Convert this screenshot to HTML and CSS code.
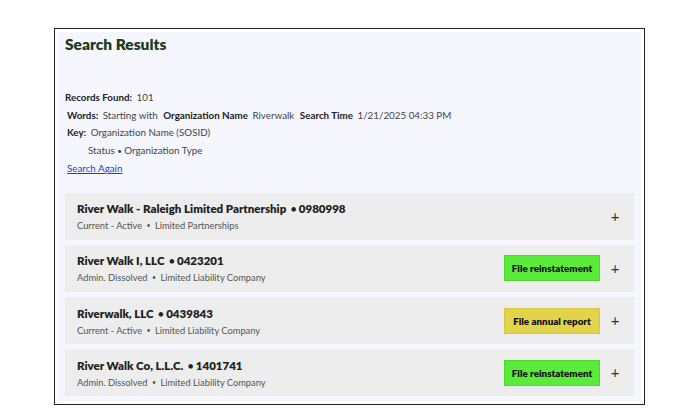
FILE: index.html
```html
<!DOCTYPE html>
<html>
<head>
<meta charset="utf-8">
<link rel="stylesheet" href="styles.css">
</head>
<body>
<div class="frame">
  <div class="panel">
    <h2 class="title">Search Results</h2>
    <div class="meta">
      <div class="line records"><b>Records Found:</b> 101</div>
      <div class="line words"><b>Words:</b> Starting with <b>Organization Name</b> Riverwalk <b>Search Time</b> 1/21/2025 04:33 PM</div>
      <div class="line key"><b>Key:</b> Organization Name (SOSID)</div>
      <div class="line status">Status <span class="sdot">•</span> Organization Type</div>
      <a class="line again" href="#">Search Again</a>
    </div>
    <div class="list">
      <div class="row">
        <div class="info">
          <div class="name">River Walk - Raleigh Limited Partnership <span class="id"><span class="bdot">•</span> 0980998</span></div>
          <div class="sub">Current - Active <span class="dot">•</span> Limited Partnerships</div>
        </div>
        <span class="plus">+</span>
      </div>
      <div class="row">
        <div class="info">
          <div class="name">River Walk I, LLC <span class="id"><span class="bdot">•</span> 0423201</span></div>
          <div class="sub">Admin. Dissolved <span class="dot">•</span> Limited Liability Company</div>
        </div>
        <span class="btn green">File reinstatement</span>
        <span class="plus">+</span>
      </div>
      <div class="row">
        <div class="info">
          <div class="name">Riverwalk, LLC <span class="id"><span class="bdot">•</span> 0439843</span></div>
          <div class="sub">Current - Active <span class="dot">•</span> Limited Liability Company</div>
        </div>
        <span class="btn yellow">File annual report</span>
        <span class="plus">+</span>
      </div>
      <div class="row">
        <div class="info">
          <div class="name">River Walk Co, L.L.C. <span class="id"><span class="bdot">•</span> 1401741</span></div>
          <div class="sub">Admin. Dissolved <span class="dot">•</span> Limited Liability Company</div>
        </div>
        <span class="btn green">File reinstatement</span>
        <span class="plus">+</span>
      </div>
    </div>
  </div>
</div>
</body>
</html>
```

FILE: styles.css
```css
* { box-sizing: border-box; }
html, body { margin: 0; padding: 0; background: #fff; }
body {
  font-family: "Lato", "Liberation Sans", sans-serif;
  color: #333;
}
.frame {
  margin: 28px 0 0 54px;
  width: 591px;
  height: 377px;
  border: 1px solid #222;
  padding: 3px;
  background: #fff;
}
.panel {
  background: #f6f7fe;
  height: 100%;
  padding: 2px 7px 0 7px;
}
.title {
  margin: 0;
  font-size: 15.5px;
  font-weight: 800;
  color: #1f3b22;
  line-height: 20px;
}
.meta {
  margin-top: 35px;
  font-size: 9.8px;
  color: #444;
}
.meta b { color: #222; font-weight: 700; margin-right: 2px; }
.line { display: block; line-height: 17.5px; }
.words, .key { padding-left: 2px; }
.words b { margin-left: 3px; }
.words b:first-child { margin-left: 0; }
.status { padding-left: 23px; }
.sdot { font-size: 8px; }
.again { color: #1a3ee0; text-decoration: underline; padding-left: 2px; }
.list {
  margin-top: 15px;
  display: flex;
  flex-direction: column;
  gap: 5.3px;
}
.row {
  background: #ededed;
  height: 47px;
  display: flex;
  align-items: center;
  padding: 0 14px 0 12px;
}
.info { flex: 1; padding-top: 2px; }
.name { font-size: 11.5px; font-weight: 800; color: #222; line-height: 16px; }
.id { margin-left: 2px; }
.bdot { font-size: 9px; vertical-align: 1px; }
.sub { font-size: 9.3px; color: #555; line-height: 14px; margin-top: 1px; }
.dot { margin: 0 2px; font-size: 7px; vertical-align: 1px; }
.btn {
  width: 96px;
  height: 26px;
  display: flex;
  align-items: center;
  justify-content: center;
  font-size: 9.8px;
  font-weight: 800;
  color: #111;
  margin-right: 10px;
}
.green { background: #5aeb3b; border: 1px solid #4cd82f; }
.yellow { background: #e1d34a; border: 1px solid #d6c842; }
.plus { font-size: 15px; color: #333; width: 10px; text-align: center; line-height: 15px; }
```
